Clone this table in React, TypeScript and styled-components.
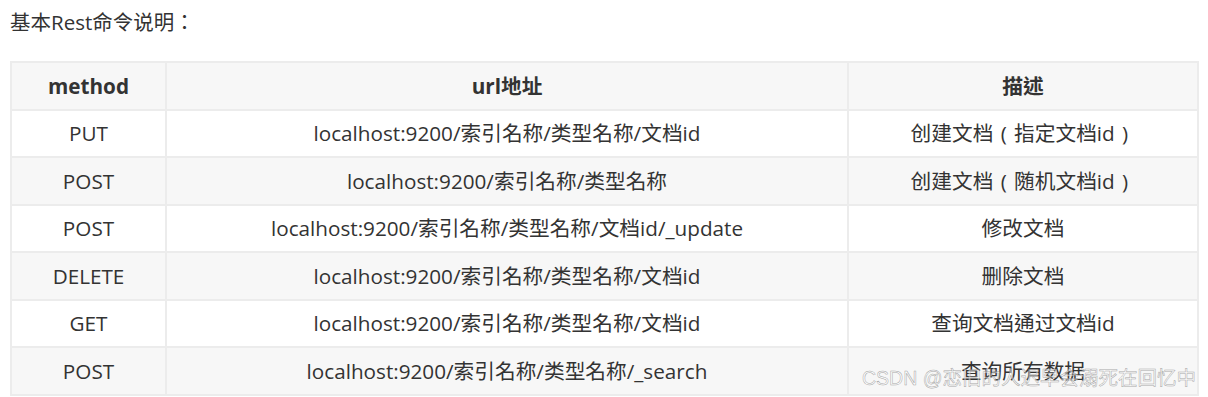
import React from "react"
import styled, { createGlobalStyle } from "styled-components"

const GlobalStyle = createGlobalStyle`
  body {
    margin: 0;
    background: #fff;
    font-family: "Open Sans", "Noto Sans CJK TC", sans-serif;
    color: #333;
  }
`

const Page = styled.div`
  position: relative;
  width: 1208px;
  height: 397px;
  padding: 8px 0 0 10px;
  box-sizing: border-box;
  overflow: hidden;
`

const Title = styled.p`
  margin: 0 0 25px 0;
  font-size: 20.5px;
  line-height: 28px;
  color: #333;
`

const Table = styled.table`
  width: 1187px;
  table-layout: fixed;
  border-collapse: collapse;
  font-size: 20.7px;
`

const Col = styled.col<{ $w: number }>`
  width: ${(p) => p.$w}px;
`

const Row = styled.tr<{ $shade?: boolean }>`
  height: 47.5px;
  background: ${(p) => (p.$shade ? "#f7f7f7" : "#fff")};
`

const HeadCell = styled.th`
  padding: 0 6px;
  border: 2px solid #ececec;
  font-weight: 700;
  text-align: center;
  line-height: 26px;
  color: #333;
`

const Cell = styled.td`
  padding: 0 6px;
  border: 2px solid #ececec;
  text-align: center;
  line-height: 26px;
  color: #333;
  white-space: nowrap;
`

// the reference font sets the full-width brackets centred in their box
const Paren = styled.span`
  display: inline-block;
  width: 1em;
  text-align: center;
`

const Watermark = styled.div`
  position: absolute;
  left: 862px;
  top: 364px;
  font-family: "Liberation Sans", "Noto Sans CJK SC", sans-serif;
  font-size: 19.5px;
  line-height: 28px;
  color: rgba(255, 255, 255, 0.5);
  -webkit-text-stroke: 0.5px rgba(125, 125, 125, 0.7);
  white-space: nowrap;
`

const desc = (text: string) => {
  const m = text.match(/^(.*)（(.*)）$/)
  if (!m) return text
  return (
    <>
      {m[1]}
      <Paren>(</Paren>
      {m[2]}
      <Paren>)</Paren>
    </>
  )
}

const rows = [
  ["PUT", "localhost:9200/索引名称/类型名称/文档id", "创建文档（指定文档id）"],
  ["POST", "localhost:9200/索引名称/类型名称", "创建文档（随机文档id）"],
  ["POST", "localhost:9200/索引名称/类型名称/文档id/_update", "修改文档"],
  ["DELETE", "localhost:9200/索引名称/类型名称/文档id", "删除文档"],
  ["GET", "localhost:9200/索引名称/类型名称/文档id", "查询文档通过文档id"],
  ["POST", "localhost:9200/索引名称/类型名称/_search", "查询所有数据"],
]

const App: React.FC = () => {
  return (
    <Page>
      <GlobalStyle />
      <Title>基本Rest命令说明：</Title>
      <Table>
        <colgroup>
          <Col $w={155} />
          <Col $w={682} />
          <Col $w={350} />
        </colgroup>
        <thead>
          <Row $shade>
            <HeadCell>method</HeadCell>
            <HeadCell>url地址</HeadCell>
            <HeadCell>描述</HeadCell>
          </Row>
        </thead>
        <tbody>
          {rows.map((r, i) => (
            <Row key={i} $shade={i % 2 === 1}>
              <Cell>{r[0]}</Cell>
              <Cell>{r[1]}</Cell>
              <Cell>{desc(r[2])}</Cell>
            </Row>
          ))}
        </tbody>
      </Table>
      <Watermark>CSDN @恋旧的人迟早会溺死在回忆中</Watermark>
    </Page>
  )
}

export default App
